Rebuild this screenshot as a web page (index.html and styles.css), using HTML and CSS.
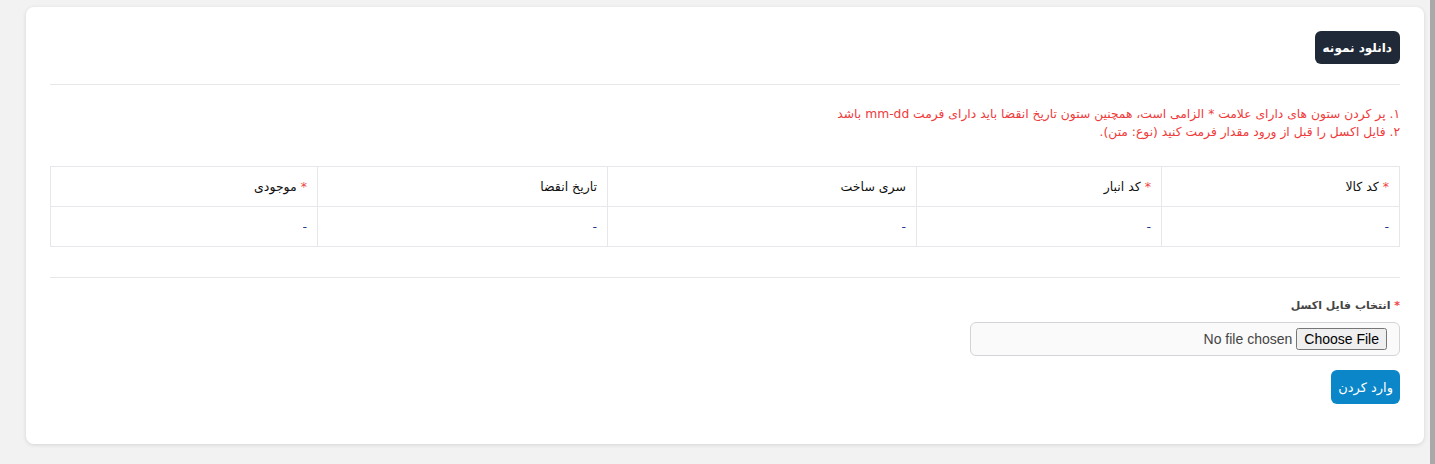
FILE: index.html
```html
<!DOCTYPE html>
<html lang="fa" dir="rtl">
<head>
  <meta charset="UTF-8">
  <meta name="viewport" content="width=device-width, initial-scale=1.0">
  <title>ورود از اکسل</title>
  <link rel="stylesheet" href="styles.css">
</head>
<body>
  <div class="page">
    <div class="card">
      <div class="card-head">
        <button class="btn btn-dark">دانلود نمونه</button>
      </div>

      <hr class="divider">

      <div class="notes">
        <p>۱. پر کردن ستون های دارای علامت * الزامی است، همچنین ستون تاریخ انقضا باید دارای فرمت mm-dd باشد</p>
        <p>۲. فایل اکسل را قبل از ورود مقدار فرمت کنید (نوع: متن).</p>
      </div>

      <table class="sample">
        <thead>
          <tr>
            <th class="col-1"><span class="req">*</span> کد کالا</th>
            <th class="col-2"><span class="req">*</span> کد انبار</th>
            <th class="col-3">سری ساخت</th>
            <th class="col-4">تاریخ انقضا</th>
            <th class="col-5"><span class="req">*</span> موجودی</th>
          </tr>
        </thead>
        <tbody>
          <tr>
            <td>-</td>
            <td>-</td>
            <td>-</td>
            <td>-</td>
            <td>-</td>
          </tr>
        </tbody>
      </table>

      <hr class="divider divider-low">

      <form class="upload">
        <label class="field-label" for="excel"><span class="req">*</span> انتخاب فایل اکسل</label>
        <div class="file-box">
          <input type="file" id="excel" class="file-input">
        </div>
        <button type="button" class="btn btn-blue">وارد کردن</button>
      </form>
    </div>
  </div>
  <div class="scrollbar"></div>
</body>
</html>
```

FILE: styles.css
```css
html, body {
  height: 100%;
}

body {
  display: flex;
  margin: 0;
  overflow: hidden;
  background-color: #f2f2f2;
  font-family: Tahoma, "DejaVu Sans", sans-serif;
  color: #111;
  direction: ltr;
}

.page {
  flex: 1;
  padding: 7px 6px 0 26px;
}

.scrollbar {
  width: 5px;
  background-color: #a9a9a9;
}

.card {
  direction: rtl;
  box-sizing: border-box;
  height: 437px;
  padding: 24px;
  background-color: #fff;
  border-radius: 8px;
  box-shadow: 0 1px 4px rgba(0, 0, 0, 0.12);
}

.card-head {
  display: flex;
}

.btn {
  border: none;
  border-radius: 6px;
  color: #fff;
  font-family: inherit;
  cursor: pointer;
}

.btn-dark {
  height: 33px;
  padding: 0 8px;
  background-color: #1f2937;
  font-size: 12px;
  font-weight: bold;
}

.btn-blue {
  height: 34px;
  margin-top: 14px;
  padding: 0 7px;
  background-color: #0a86c9;
  font-size: 13px;
}

.divider {
  margin: 20px 0 0;
  border: none;
  border-top: 1px solid #e7e7e7;
}

.divider-low {
  margin-top: 30px;
}

.notes {
  margin-top: 20px;
  color: #ef3b3b;
  font-size: 12.3px;
  line-height: 18px;
}

.notes p {
  margin: 0;
}

.sample {
  width: 100%;
  margin-top: 25px;
  border-collapse: collapse;
  table-layout: fixed;
  font-size: 12.5px;
}

.sample th,
.sample td {
  height: 39px;
  padding: 0 10px;
  border: 1px solid #e5e7eb;
  text-align: right;
  font-weight: normal;
}

.sample td {
  color: #1e3a8a;
}

/* widths are content widths: cell minus padding and border */
.col-1 { width: 217px; }
.col-2 { width: 224px; }
.col-3 { width: 288px; }
.col-4 { width: 269px; }

.req {
  color: #ef4444;
}

.upload {
  display: flex;
  flex-direction: column;
  align-items: flex-start;
  margin-top: 21px;
}

.field-label {
  color: #444;
  font-size: 11px;
  font-weight: bold;
}

.file-box {
  box-sizing: border-box;
  width: 430px;
  height: 34px;
  margin-top: 10px;
  padding: 0 12px;
  display: flex;
  align-items: center;
  border: 1px solid #d4d4d8;
  border-radius: 6px;
  background-color: #fafafa;
}

.file-input {
  font-family: "Liberation Sans", Arial, sans-serif;
  font-size: 14px;
  color: #444;
}
```
